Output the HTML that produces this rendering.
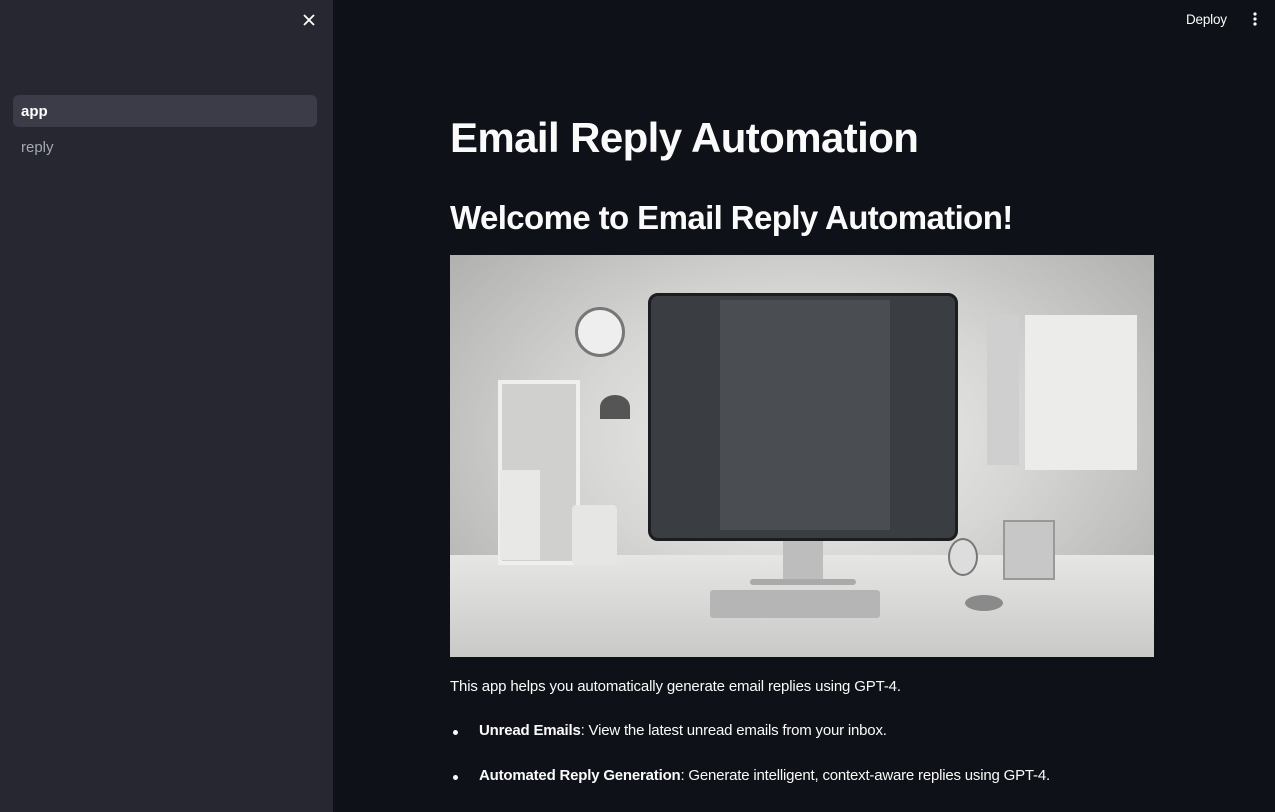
<!DOCTYPE html>
<html><head><meta charset="utf-8"><style>
*{margin:0;padding:0;box-sizing:border-box}
body{width:1275px;height:812px;overflow:hidden;background:#0e1117;font-family:"Liberation Sans",sans-serif;color:#fafafa;position:relative}
.sb{position:absolute;left:0;top:0;width:333px;height:812px;background:#262730}
.x{position:absolute;left:301px;top:12px}
.nav{position:absolute;left:13px;width:304px;height:32px;border-radius:6px;padding-left:8px;line-height:34px;font-size:15px}
.a{top:95px;background:#3b3c48;font-weight:bold;color:#fff}
.r{top:131px;color:#a3a8b4}
.dep{position:absolute;left:1186px;top:12px;font-size:13.5px;letter-spacing:-0.2px}
.dots{position:absolute;left:1253px;top:12px}
h1{position:absolute;left:450px;top:114px;font-size:42px;font-weight:bold;letter-spacing:-0.6px}
h2{position:absolute;left:450px;top:199px;font-size:33px;font-weight:bold;letter-spacing:-0.6px}
.img{position:absolute;left:450px;top:255px;width:704px;height:402px;overflow:hidden;background:radial-gradient(ellipse at 50% 45%,#f2f2f0 0%,#d6d6d4 45%,#a9a9a8 100%)}
p{position:absolute;font-size:15px;color:#fafafa;letter-spacing:-0.15px}
ul li{position:absolute;left:479px;font-size:15px;list-style:none;letter-spacing:-0.2px}
ul li::before{content:"";position:absolute;left:-26px;top:8px;width:5px;height:5px;border-radius:50%;background:#fafafa}
</style></head><body>
<div class="sb">
<svg class="x" width="16" height="16" viewBox="0 0 16 16"><path d="M3 3L13 13M13 3L3 13" stroke="#fff" stroke-width="1.8"/></svg>
<div class="nav a">app</div>
<div class="nav r">reply</div>
</div>
<div class="dep">Deploy</div>
<svg class="dots" width="4" height="16"><circle cx="2" cy="2" r="1.6" fill="#fff"/><circle cx="2" cy="7" r="1.6" fill="#fff"/><circle cx="2" cy="12" r="1.6" fill="#fff"/></svg>
<h1>Email Reply Automation</h1>
<h2>Welcome to Email Reply Automation!</h2>
<div class="img">
<div style="position:absolute;left:0;top:300px;width:704px;height:102px;background:linear-gradient(#e6e6e4,#c9c9c7)"></div>
<div style="position:absolute;left:48px;top:125px;width:82px;height:185px;border:4px solid #efefef;background:#d0d0ce"></div>
<div style="position:absolute;left:50px;top:215px;width:40px;height:90px;background:#e8e8e6"></div>
<div style="position:absolute;left:125px;top:52px;width:50px;height:50px;border-radius:50%;background:#eee;border:3px solid #777"></div>
<div style="position:absolute;left:150px;top:140px;width:30px;height:24px;border-radius:50% 50% 0 0;background:#555"></div>
<div style="position:absolute;left:122px;top:250px;width:45px;height:60px;background:#e6e6e4;border-radius:4px"></div>
<div style="position:absolute;left:198px;top:38px;width:310px;height:248px;background:#3a3d41;border-radius:10px;border:3px solid #1c1d1f"></div>
<div style="position:absolute;left:270px;top:45px;width:170px;height:230px;background:#4a4d52"></div>
<div style="position:absolute;left:333px;top:286px;width:40px;height:40px;background:#bdbdbd"></div>
<div style="position:absolute;left:300px;top:324px;width:106px;height:6px;background:#aaa;border-radius:3px"></div>
<div style="position:absolute;left:260px;top:335px;width:170px;height:28px;background:#b5b5b5;border-radius:3px"></div>
<div style="position:absolute;left:515px;top:340px;width:38px;height:16px;border-radius:50%;background:#8a8a8a"></div>
<div style="position:absolute;left:537px;top:60px;width:32px;height:150px;background:#cfcfcf"></div>
<div style="position:absolute;left:575px;top:60px;width:112px;height:155px;background:#ececea"></div>
<div style="position:absolute;left:553px;top:265px;width:52px;height:60px;background:#c7c7c7;border:2px solid #999"></div>
<div style="position:absolute;left:498px;top:283px;width:30px;height:38px;border-radius:50%;background:#ddd;border:2px solid #777"></div>
</div>
<p style="left:450px;top:678px">This app helps you automatically generate email replies using GPT-4.</p>
<ul>
<li style="top:722px"><b>Unread Emails</b>: View the latest unread emails from your inbox.</li>
<li style="top:767px"><b>Automated Reply Generation</b>: Generate intelligent, context-aware replies using GPT-4.</li>
</ul>
</body></html>
